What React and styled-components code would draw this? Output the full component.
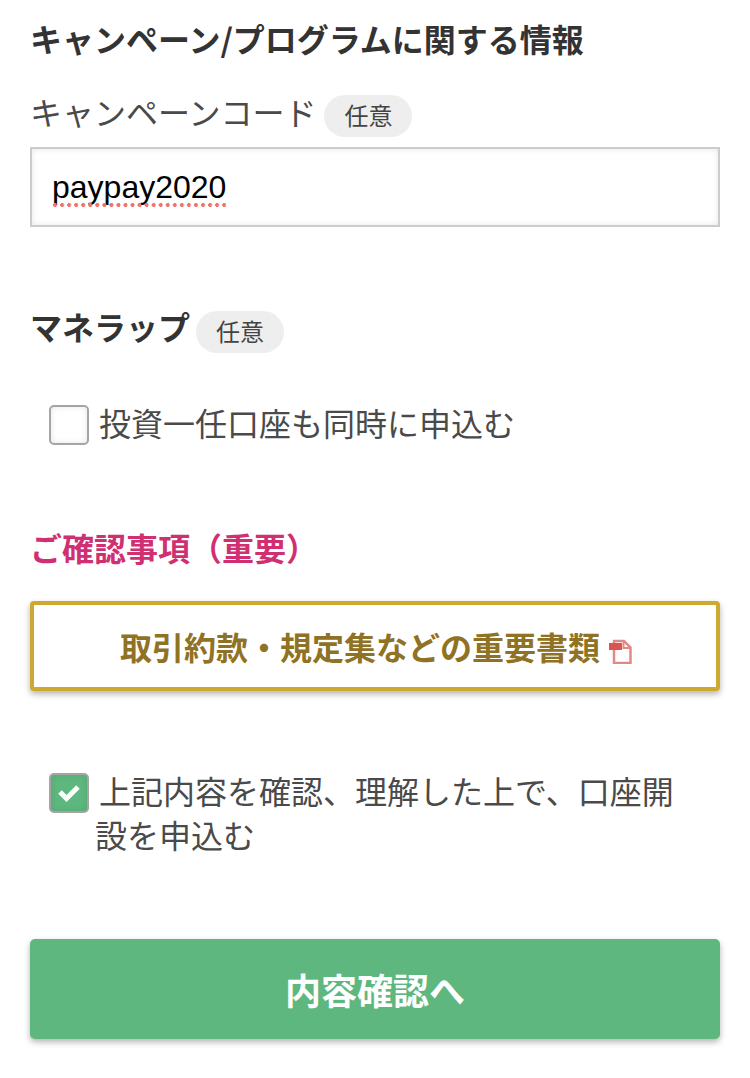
import React from "react";
import styled, { createGlobalStyle } from "styled-components";

const Global = createGlobalStyle`
  html, body { margin: 0; padding: 0; background: #fff; }
  body { font-family: "Liberation Sans", "Noto Sans CJK JP", sans-serif; color: #333; }
`;

const Page = styled.main`
  width: 750px;
  height: 1078px;
  box-sizing: border-box;
  padding: 18px 30px 0;
  overflow: hidden;
`;

const Heading = styled.h2`
  margin: 0;
  font-family: "Noto Sans CJK JP", sans-serif;
  font-size: 32px;
  line-height: 40px;
  font-weight: 700;
  color: #333;
`;

const FieldLabel = styled.div`
  display: flex;
  align-items: flex-start;
  gap: ${(p) => (p.$bold ? 6 : 8)}px;
  height: 44px;
  margin-top: ${(p) => p.$top}px;
  font-size: 32px;
  line-height: 44px;
  font-weight: ${(p) => (p.$bold ? 700 : 400)};
  color: ${(p) => (p.$bold ? "#333" : "#4a4a4a")};
`;

const Badge = styled.span`
  flex: none;
  box-sizing: border-box;
  display: inline-flex;
  align-items: center;
  justify-content: center;
  width: 88px;
  height: 42px;
  padding-top: 2px;
  margin-top: ${(p) => (p.$low ? 4 : 3)}px;
  border-radius: 21px;
  background: #eee;
  font-size: 24px;
  line-height: 40px;
  font-weight: 400;
  color: #444;
`;

const CodeInput = styled.div`
  box-sizing: border-box;
  width: 690px;
  height: 80px;
  margin-top: 11px;
  padding: 1px 20px 0;
  display: flex;
  align-items: center;
  border: 2px solid #ccc;
  box-shadow: inset 0 0 6px rgba(0, 0, 0, 0.1);
  font-size: 32px;
  color: #000;
`;

const Misspelled = styled.span`
  position: relative;
  &::after {
    content: "";
    position: absolute;
    left: 1px;
    right: 0;
    top: 34px;
    height: 4px;
    background: radial-gradient(circle at 2px 2px, #f0736c 1.8px, transparent 2.2px) 0 0 / 7.05px 4px repeat-x;
  }
`;

const CheckRow = styled.label`
  display: flex;
  align-items: flex-start;
  gap: 6px;
  margin-top: ${(p) => p.$top}px;
  padding-left: 19px;
  font-size: 32px;
  line-height: 44px;
  font-weight: 400;
  color: #4a4a4a;
`;

const Box = styled.span`
  flex: none;
  box-sizing: border-box;
  width: 40px;
  height: 40px;
  margin-top: 2px;
  display: flex;
  align-items: center;
  justify-content: center;
  border: 2px solid #a5a5a5;
  border-radius: 5px;
  background: ${(p) => (p.$checked ? "#5eb77e" : "#fff")};
  box-shadow: inset 0 0 6px rgba(0, 0, 0, 0.1);
`;

const CheckText = styled.span`
  width: 591px;
  text-indent: 4px;
`;

const Notice = styled.h3`
  margin: 81px 0 0;
  font-size: 32px;
  line-height: 44px;
  font-weight: 700;
  color: #d02f72;
`;

const DocLink = styled.a`
  box-sizing: border-box;
  width: 690px;
  height: 90px;
  margin-top: 29px;
  padding-left: 2px;
  display: flex;
  align-items: center;
  justify-content: center;
  gap: 8px;
  border: 4px solid #cfa92f;
  border-radius: 4px;
  background: #fff;
  box-shadow: 0 3px 6px rgba(0, 0, 0, 0.3);
  font-size: 32px;
  font-weight: 700;
  color: #8f7223;
`;

const Submit = styled.button`
  display: block;
  width: 690px;
  height: 100px;
  margin-top: 80px;
  border: 0;
  border-radius: 5px;
  background: #5eb77e;
  box-shadow: 0 3px 6px rgba(0, 0, 0, 0.3);
  color: #fff;
  font-family: inherit;
  font-size: 36px;
  font-weight: 700;
`;

const DocIconSvg = styled.svg`
  flex: none;
  margin-top: 10px;
`;

const DocIcon = () => (
  <DocIconSvg width="24" height="25" viewBox="0 0 24 25">
    <path d="M6 2h10l6.5 6.5V24H6z" fill="#fff" stroke="#e08a88" strokeWidth="2.5" />
    <path d="M15.5 2v7h7" fill="none" stroke="#e08a88" strokeWidth="2" />
    <rect x="1" y="4" width="13" height="7" fill="#dc5350" />
  </DocIconSvg>
);

const Check = () => (
  <svg width="24" height="18" viewBox="0 0 24 18">
    <path d="M3 8l6.5 6.5L21 3" fill="none" stroke="#fff" strokeWidth="5" />
  </svg>
);

export default function App() {
  return (
    <Page>
      <Global />
      <Heading>キャンペーン/プログラムに関する情報</Heading>
      <FieldLabel $top={34}>
        キャンペーンコード<Badge>任意</Badge>
      </FieldLabel>
      <CodeInput>
        <Misspelled>paypay2020</Misspelled>
      </CodeInput>
      <FieldLabel $top={80} $bold>
        マネラップ<Badge $low>任意</Badge>
      </FieldLabel>
      <CheckRow $top={52}>
        <Box />
        <CheckText>投資一任口座も同時に申込む</CheckText>
      </CheckRow>
      <Notice>ご確認事項（重要）</Notice>
      <DocLink>
        取引約款・規定集などの重要書類
        <DocIcon />
      </DocLink>
      <CheckRow $top={80}>
        <Box $checked>
          <Check />
        </Box>
        <CheckText>上記内容を確認、理解した上で、口座開設を申込む</CheckText>
      </CheckRow>
      <Submit>内容確認へ</Submit>
    </Page>
  );
}
